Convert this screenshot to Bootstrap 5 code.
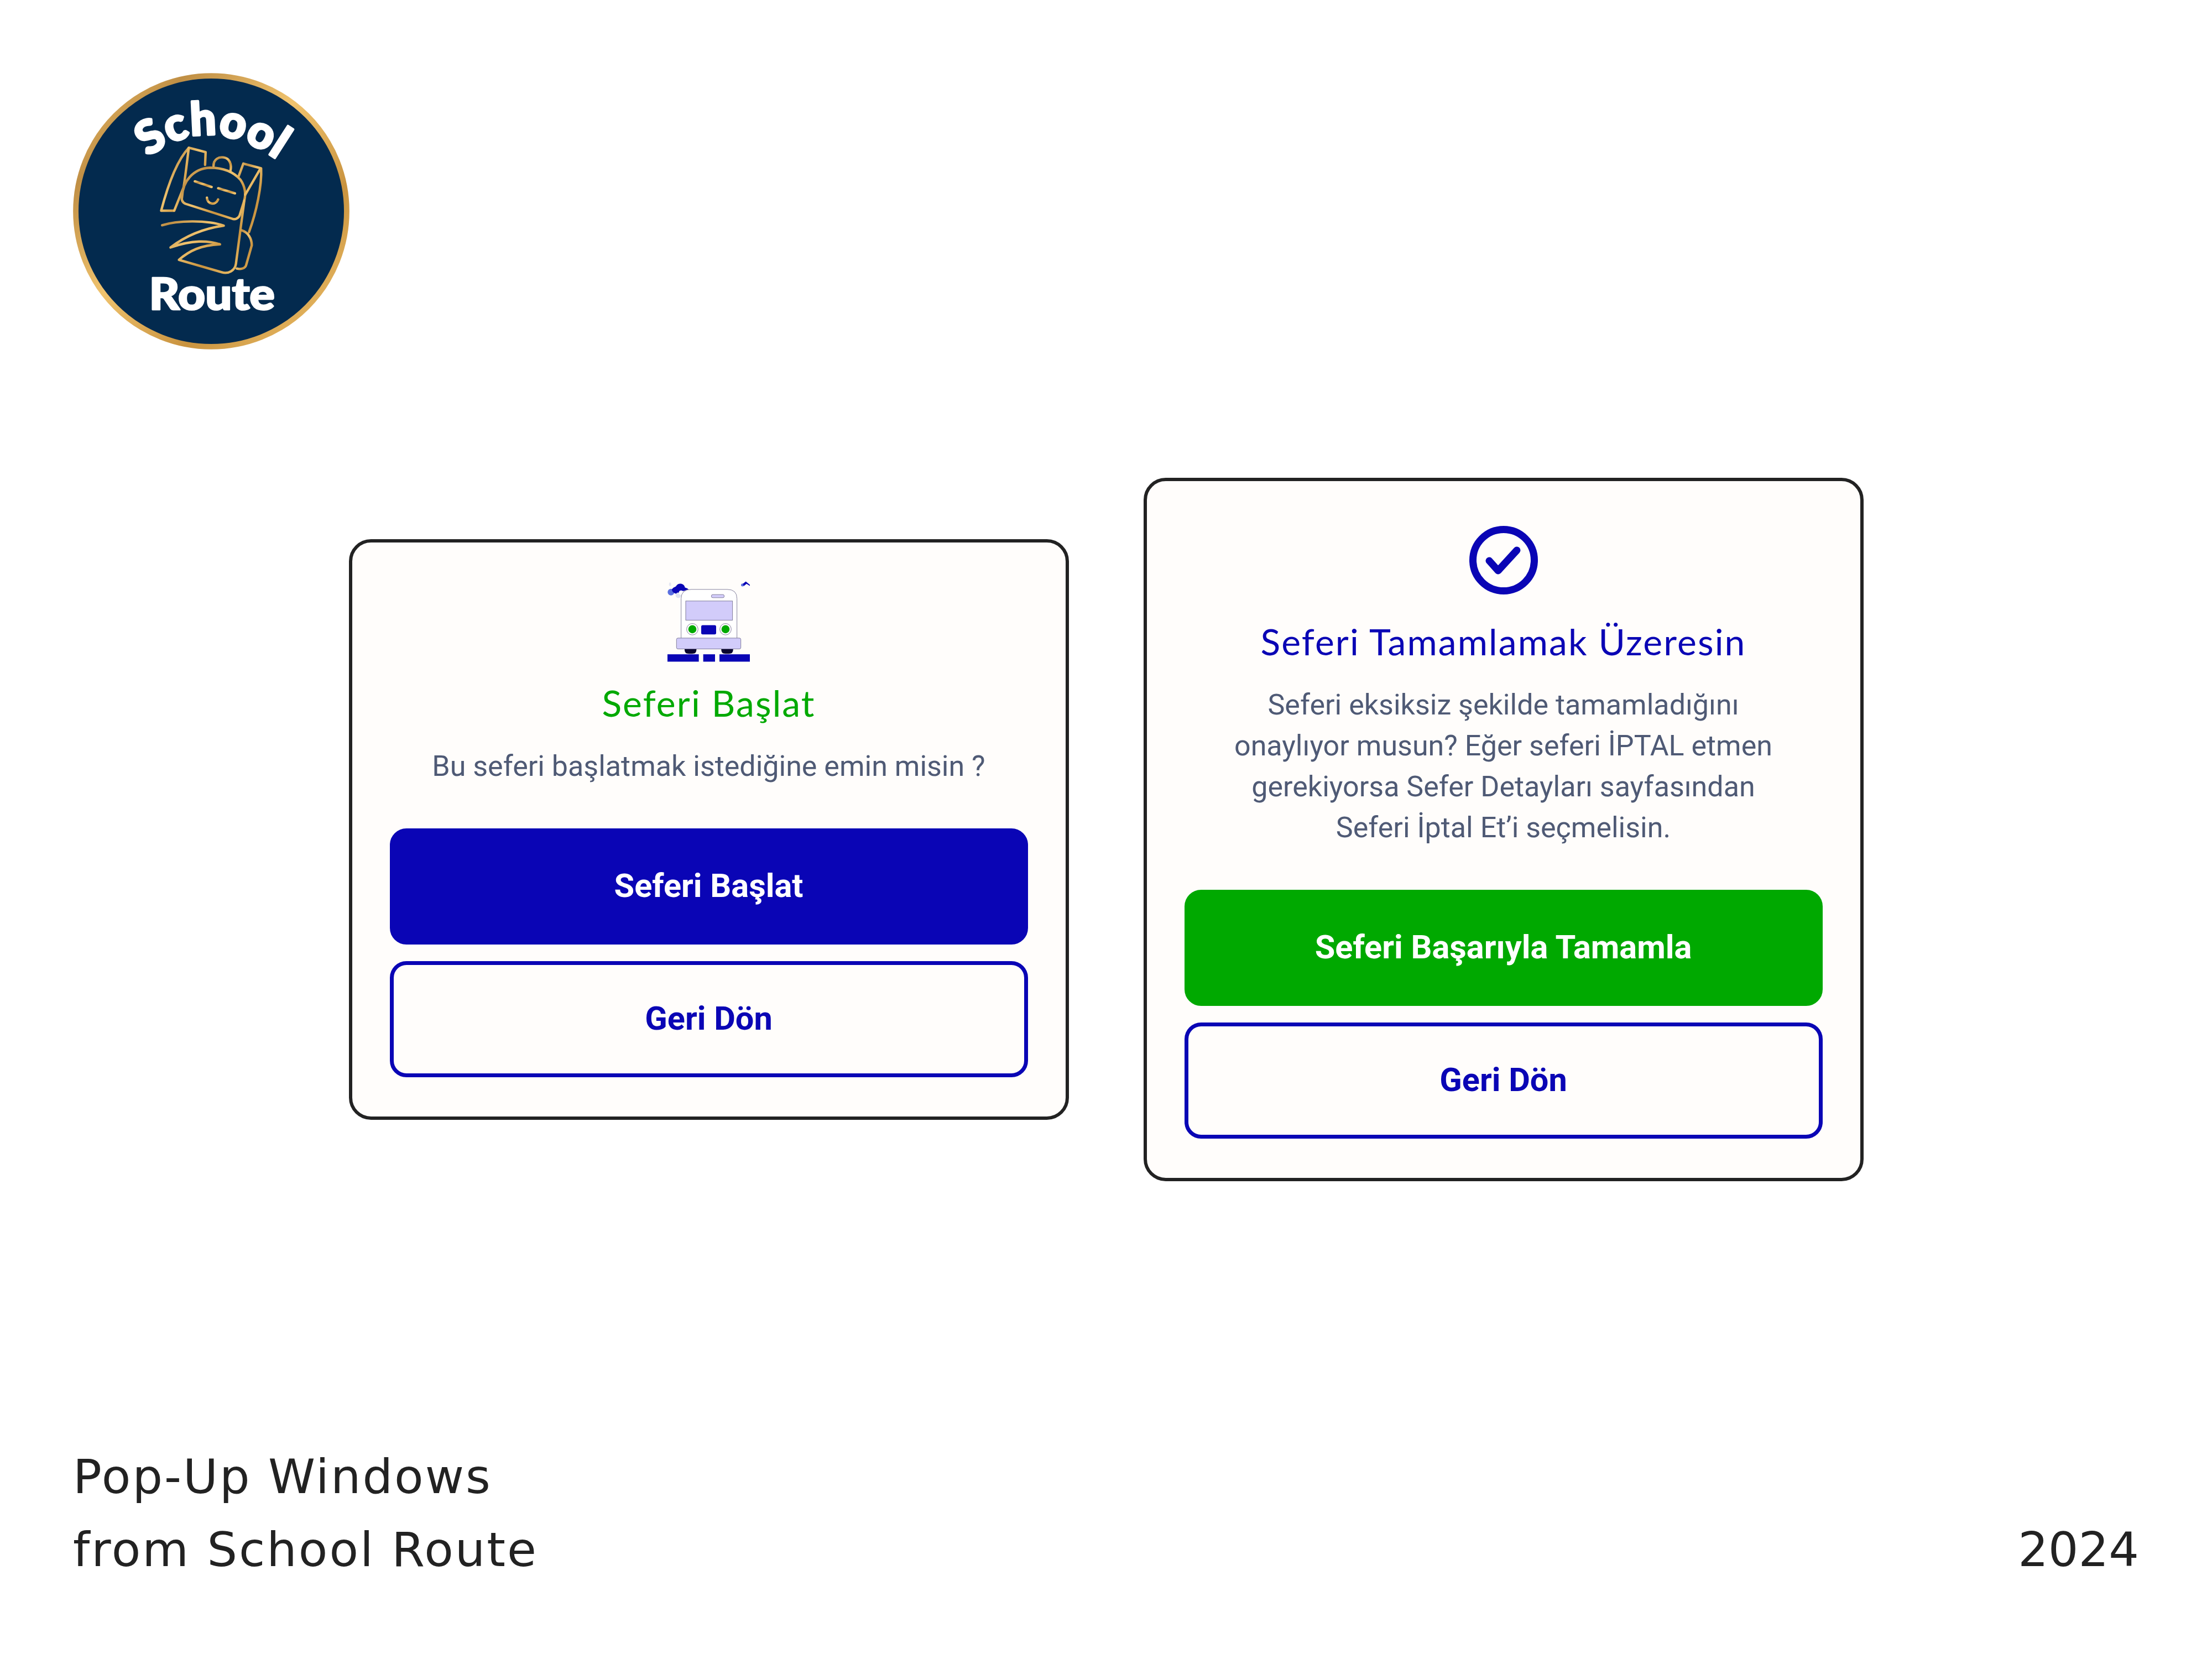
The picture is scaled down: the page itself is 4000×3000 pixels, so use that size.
<!DOCTYPE html>
<html lang="tr">

<head>
    <meta charset="UTF-8">
    <meta name="viewport" content="width=device-width, initial-scale=1.0">
    <title>Pop-Up Windows from School Route</title>
    <link href="https://cdn.jsdelivr.net/npm/bootstrap@5.3.0/dist/css/bootstrap.min.css" rel="stylesheet">
    <style>
        body {
            background-color: #fff;
            margin: 0;
        }

        .sayfa {
            width: 4000px;
            height: 3000px;
            display: grid;
            grid-template-rows: 1fr auto 1fr;
            padding: 132px;
        }

        .logo-svg {
            width: 500px;
            height: 500px;
            display: block;
        }

        .popup-satir {
            gap: 135px;
        }

        .popup {
            width: 1302px;
            background-color: #fffdfb;
            border: 6px solid #222;
            border-radius: 40px;
            padding: 68px 68px 71px;
            text-align: center;
        }

        .ikon-kutu {
            height: 150px;
        }

        .popup-baslik {
            font-family: "Lato", sans-serif;
            font-size: 66px;
            font-weight: 400;
            line-height: 90px;
            margin: 27px 0 0;
            letter-spacing: 2.1px;
        }

        .baslik-yesil {
            color: #00a900;
        }

        .baslik-mavi {
            color: #0a05b5;
        }

        .popup-metin {
            font-family: "Roboto", sans-serif;
            font-size: 52px;
            line-height: 74px;
            color: #4f5a75;
            margin: 33px 0 75px;
        }

        .buton {
            font-family: "Roboto", sans-serif;
            font-size: 59.5px;
            font-weight: 700;
            height: 210px;
            border-radius: 30px;
            border-width: 7px;
            border-style: solid;
        }

        .buton-mavi {
            background-color: #0a05b5;
            border-color: #0a05b5;
            color: #fff;
        }

        .buton-yesil {
            background-color: #00a900;
            border-color: #00a900;
            color: #fff;
        }

        .buton-cerceve {
            background-color: #fffdfb;
            border-color: #0a05b5;
            color: #0a05b5;
        }

        .buton-grup {
            gap: 30px;
        }

        .alt-yazi {
            font-family: "DejaVu Sans", sans-serif;
            font-size: 86px;
            line-height: 132px;
            letter-spacing: 3px;
            color: #222;
        }

        .alt-yil {
            letter-spacing: 0;
        }
    </style>
</head>

<body>
    <div class="sayfa">
        <header>
            <svg class="logo-svg" viewBox="38 38 1480 1480" xmlns="http://www.w3.org/2000/svg">
                <defs>
                    <linearGradient id="altin" x1="0" y1="0" x2="1" y2="1">
                        <stop offset="0" stop-color="#f3c66f" />
                        <stop offset="0.2" stop-color="#c08f45" />
                        <stop offset="0.45" stop-color="#f0c36e" />
                        <stop offset="0.7" stop-color="#c9933f" />
                        <stop offset="1" stop-color="#f3c66f" />
                    </linearGradient>
                    <path id="okul-yay" d="M440 490 Q770 230 1170 530" />
                </defs>
                <circle cx="778" cy="778" r="725" fill="#032a4e" stroke="url(#altin)" stroke-width="29" />
                <g fill="none" stroke="url(#altin)" stroke-width="13" stroke-linecap="round" stroke-linejoin="round">
                    <path d="M578 775 L510 775 C540 660 590 510 658 438 L748 462 L745 530" />
                    <path d="M658 438 C650 500 640 590 630 650 L580 775" />
                    <path d="M622 700 C625 620 680 550 770 545 C850 545 900 570 935 610 C955 640 965 680 955 720 L930 800 C925 815 905 825 890 818 L640 738 C622 730 618 715 622 700 Z" />
                    <path d="M790 535 C790 500 820 485 845 490 C875 495 890 525 880 565" />
                    <path d="M925 590 L950 523 L1045 548 C1050 640 1020 780 980 890" />
                    <path d="M1040 552 L960 690" />
                    <path d="M955 720 L910 1060 C905 1095 870 1115 835 1105 L605 1038 C660 990 720 960 825 955 C760 935 680 930 560 972 C640 910 740 870 845 855 C760 825 600 825 515 853" />
                    <path d="M940 880 C975 890 995 925 995 960 L965 1065 C960 1085 935 1090 915 1085" />
                    <path d="M690 618 L780 648" />
                    <path d="M815 655 L905 682" />
                    <path d="M885 682 L885 703" />
                    <path d="M755 705 C755 740 800 750 815 715" />
                    <path d="M728 703 L728 704" />
                </g>
                <text font-family="Lato, sans-serif" font-weight="900" font-size="245" fill="#fff" stroke="#fff" stroke-width="12" stroke-linejoin="round" letter-spacing="2">
                    <textPath href="#okul-yay">School</textPath>
                </text>
                <text x="445" y="1305" font-family="Lato, sans-serif" font-weight="900" font-size="236" fill="#fff" stroke="#fff" stroke-width="8" stroke-linejoin="round" textLength="673" lengthAdjust="spacingAndGlyphs">Route</text>
            </svg>
        </header>

        <main class="d-flex justify-content-center align-items-center popup-satir">
            <div class="popup">
                <div class="ikon-kutu d-flex justify-content-center align-items-center">
                    <svg width="151" height="147" viewBox="168 96 453 440" xmlns="http://www.w3.org/2000/svg">
                        <circle cx="190" cy="155" r="18" fill="#5a6fe0" />
                        <path d="M195 140 C205 125 215 128 218 122 C228 102 262 105 266 130 C280 134 285 138 285 142 L250 150 L230 165 C210 165 195 155 195 140 Z" fill="#0a05b5" />
                        <circle cx="230" cy="172" r="15" fill="#dfe3f0" />
                        <circle cx="245" cy="158" r="12" fill="#fff" />
                        <ellipse cx="185" cy="112" rx="6" ry="10" fill="#e6e8f2" />
                        <circle cx="578" cy="116" r="8" fill="#5a6fe0" />
                        <path d="M580 110 L596 97 L618 115 L618 121 L600 110 L585 122 Z" fill="#0a05b5" />
                        <path d="M264 455 H328 V468 Q328 489 305 489 H287 Q264 489 264 468 Z" fill="#0a0530" />
                        <path d="M463 455 H527 V468 Q527 489 504 489 H486 Q463 489 463 468 Z" fill="#0a0530" />
                        <path d="M245 405 V190 Q245 140 300 140 H495 Q548 140 548 190 V405" fill="#fff" stroke="#6e6a8a" stroke-width="2.5" />
                        <rect x="409" y="168" width="70" height="17" rx="8" fill="#d2ccfa" stroke="#6e6a8a" stroke-width="2.5" />
                        <rect x="270" y="203" width="254" height="104" fill="#d2ccfa" stroke="#6e6a8a" stroke-width="2.5" />
                        <circle cx="306" cy="356" r="31" fill="#fff" stroke="#6e6a8a" stroke-width="2.5" />
                        <circle cx="306" cy="356" r="22" fill="#00a900" />
                        <circle cx="486" cy="356" r="31" fill="#fff" stroke="#6e6a8a" stroke-width="2.5" />
                        <circle cx="486" cy="356" r="22" fill="#00a900" />
                        <rect x="354" y="334" width="81" height="50" rx="8" fill="#0a05b5" />
                        <rect x="220" y="404" width="349" height="59" rx="8" fill="#d2ccfa" stroke="#6e6a8a" stroke-width="2.5" />
                        <rect x="171" y="492" width="170" height="40" fill="#0a05b5" />
                        <rect x="365" y="492" width="64" height="40" fill="#0a05b5" />
                        <rect x="453" y="492" width="165" height="40" fill="#0a05b5" />
                    </svg>
                </div>
                <h2 class="popup-baslik baslik-yesil">Seferi Başlat</h2>
                <p class="popup-metin">Bu seferi başlatmak istediğine emin misin ?</p>
                <div class="d-grid buton-grup">
                    <button type="button" class="btn buton buton-mavi">Seferi Başlat</button>
                    <button type="button" class="btn buton buton-cerceve">Geri Dön</button>
                </div>
            </div>

            <div class="popup">
                <div class="ikon-kutu d-flex justify-content-center align-items-center">
                    <svg width="124" height="124" viewBox="0 0 124 124" xmlns="http://www.w3.org/2000/svg">
                        <circle cx="62" cy="62" r="55.5" fill="none" stroke="#0a05b5" stroke-width="13" />
                        <path d="M36 63 L52 81 L86 44" fill="none" stroke="#0a05b5" stroke-width="13" stroke-linecap="round" stroke-linejoin="round" />
                    </svg>
                </div>
                <h2 class="popup-baslik baslik-mavi">Seferi Tamamlamak Üzeresin</h2>
                <p class="popup-metin">Seferi eksiksiz şekilde tamamladığını<br>onaylıyor musun? Eğer seferi İPTAL etmen<br>gerekiyorsa Sefer Detayları sayfasından<br>Seferi İptal Et’i seçmelisin.</p>
                <div class="d-grid buton-grup">
                    <button type="button" class="btn buton buton-yesil">Seferi Başarıyla Tamamla</button>
                    <button type="button" class="btn buton buton-cerceve">Geri Dön</button>
                </div>
            </div>
        </main>

        <footer class="d-flex justify-content-between align-items-end alt-yazi">
            <div>Pop-Up Windows<br>from School Route</div>
            <div class="alt-yil">2024</div>
        </footer>
    </div>

    <script src="https://cdn.jsdelivr.net/npm/bootstrap@5.3.0/dist/js/bootstrap.bundle.min.js"></script>
</body>

</html>
